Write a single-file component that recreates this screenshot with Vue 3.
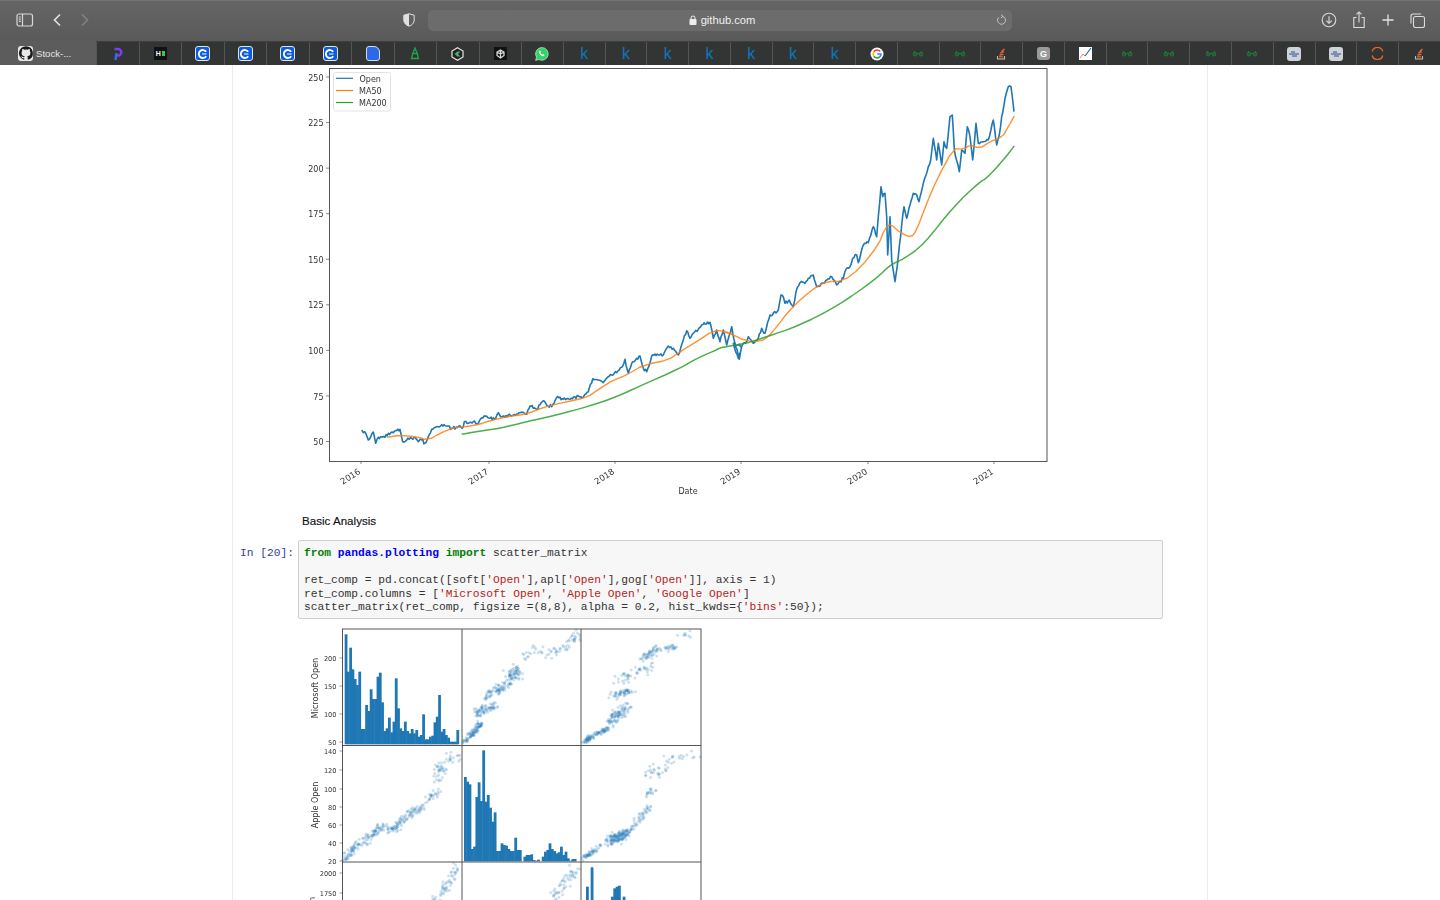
<script setup>
const tabs = ['p', 'hn', 'c', 'c', 'c', 'c', 'doc', 'a', 'hex', 'box', 'wa', 'k', 'k', 'k', 'k', 'k', 'k', 'k', 'g', 'gl', 'gl', 'so', 'gg', 'chart', 'gl', 'gl', 'gl', 'gl', 'db', 'db', 'arc', 'so']

// reads points from zoomed crops (3x) back to page coords
function page(ox, oy, flat) {
  const out = []
  for (let i = 0; i < flat.length; i += 2) out.push([ox + flat[i] / 3, oy + flat[i + 1] / 3])
  return out
}
const str = (list) => list.map((p) => p[0].toFixed(1) + ',' + p[1].toFixed(1)).join(' ')

let seed = 42
function rnd() {
  seed = (seed * 16807) % 2147483647
  return seed / 2147483647
}

function smooth(list, rounds) {
  let cur = list
  for (let r = 0; r < rounds; r++) {
    const next = [cur[0]]
    for (let i = 0; i < cur.length - 1; i++) {
      const a = cur[i]
      const b = cur[i + 1]
      next.push([a[0] * 0.75 + b[0] * 0.25, a[1] * 0.75 + b[1] * 0.25])
      next.push([a[0] * 0.25 + b[0] * 0.75, a[1] * 0.25 + b[1] * 0.75])
    }
    next.push(cur[cur.length - 1])
    cur = next
  }
  return cur
}

const blueRaw = [
  ...page(330, 280, [95,450,100,458,108,462,115,480,122,470,130,456,137,490,145,472,155,470,165,472,175,460,190,458,210,448,218,485,230,480,245,475,255,472,265,485,275,480,285,490,295,470,305,448,325,440,345,437,365,445,385,440,400,440,403,425,415,430,430,425,445,430,462,408,480,415,497,415,505,398,515,410,535,405,560,402,580,397,590,403,600,378,620,388,640,362,650,375,665,380,680,352,700,358,720,358,745,348,760,352,775,335,788,296,805,300,820,308,830,295,845,285,860,278,875,262,885,238,895,280,908,245,920,235,930,228,940,265,950,275,965,228,985,225,1000,225,1015,198,1030,205,1045,225,1060,180,1070,152,1080,175,1090,160,1105,148,1115,135,1140,127,1150,175,1160,150,1170,185,1180,150,1190,195,1205,140,1215,190,1228,238,1235,200]),
  ...page(720, 70, [40,820,55,865,65,830,80,815,85,800,100,820,115,805,125,775,135,790,150,735,175,720,183,675,190,680,195,700,208,690,220,710,228,665,240,638,255,640,265,625,280,615,290,650,310,640,335,620,350,645,370,625,378,598,390,590,398,565,410,555,415,578,430,525,445,518,460,470,470,500,475,440,483,350,488,380,495,370,500,440,503,555,510,440,515,570,525,635,535,560,545,465,552,410,560,445,570,405,580,370,590,375,597,395,610,340,625,290,632,270,640,205,650,270,655,220,665,285,672,215,680,235,690,140,697,135,703,240,718,305,725,240,735,250,742,170,750,200,758,270,768,160,775,220,790,215,805,210,820,150,830,225,838,195,845,140,855,85,865,50,873,50,878,90,882,125])
]
// add the day to day wobble between the read points
const blue = []
blueRaw.forEach((p, i) => {
  blue.push(p)
  const n = blueRaw[i + 1]
  if (!n) return
  const steps = Math.max(1, Math.round(Math.abs(n[0] - p[0]) / 1.2))
  for (let s = 1; s < steps; s++) {
    const t = s / steps
    blue.push([p[0] + (n[0] - p[0]) * t, p[1] + (n[1] - p[1]) * t + (rnd() - 0.5) * 3.2])
  }
})

const orange = smooth([
  ...page(330, 280, [170,472,210,466,255,470,295,480,330,460,370,443,410,440,450,432,480,422,530,410,590,402,640,382,700,367,770,353,810,325,850,300,890,285,940,255,1015,240,1050,215,1100,185,1150,152,1180,153,1215,165]),
  ...page(720, 70, [0,782,40,795,75,812,120,815,145,800,175,765,200,730,250,680,290,650,320,635,370,633,420,595,475,525,495,475,512,462,540,488,573,503,590,480,620,400,650,330,700,235,730,238,750,225,780,235,810,215,848,200,865,170,883,138])
], 1)
const green = smooth([
  ...page(330, 280, [395,463,450,453,510,445,590,425,680,405,780,378,860,350,930,318,1050,265,1100,235,1170,205]),
  ...page(720, 70, [0,833,80,820,140,800,230,770,350,710,470,625,510,585,550,567,610,525,700,410,780,335,800,325,850,270,883,228])
], 2)

const yTicks = [250, 225, 200, 175, 150, 125, 100, 75, 50].map((v) => ({ v, y: 441.5 - (v - 50) * 1.8225 }))
const xTicks = [[2016, 361], [2017, 489], [2018, 615], [2019, 741], [2020, 868], [2021, 994]].map(([v, x]) => ({ v, x }))

// histograms: tops as read from the 3x crop
function bars(x0, w, base, tops) {
  return tops.map((t, i) => ({ x: 300 + (x0 + i * w) / 3, y: 625 + t / 3, w: w / 3 + 0.5, h: (base - t) / 3 }))
}
const hist = [
  ...bars(134, 6.84, 358, [28,140,68,133,162,180,140,312,312,240,258,193,222,222,155,143,232,318,310,278,322,290,160,250,310,318,290,318,325,312,325,315,335,330,268,343,343,335,332,292,275,210,320,312,330,338,350,350,350,315]),
  ...bars(492, 6.86, 709, [456,470,478,672,665,516,472,528,376,530,510,548,590,562,678,678,655,660,662,672,678,678,638,675,675,709,695,690,690,688,705,707,704,709,695,680,675,655,672,678,685,682,665,690,680,700,707,702,702,709]),
  ...[[858,785],[865,840],[872,727],[933,815],[940,790],[947,785],[954,782],[961,825],[968,815]].map(([x, t]) => ({ x: 300 + x / 3, y: 625 + t / 3, w: 2.8, h: 120 }))
]

function cloud(flat, n, spread, box) {
  const line = page(300, 625, flat)
  const lens = []
  let total = 0
  for (let i = 0; i < line.length - 1; i++) {
    const l = Math.hypot(line[i + 1][0] - line[i][0], line[i + 1][1] - line[i][1])
    lens.push(l)
    total += l
  }
  const out = []
  for (let k = 0; k < n; k++) {
    let d = rnd() * total
    let i = 0
    while (i < lens.length - 1 && d > lens[i]) d -= lens[i++]
    const t = d / lens[i]
    const x = line[i][0] + (line[i + 1][0] - line[i][0]) * t + (rnd() + rnd() - 1) * spread * 1.5
    const y = line[i][1] + (line[i + 1][1] - line[i][1]) * t + (rnd() + rnd() - 1) * spread * 1.5
    out.push({ x: Math.min(Math.max(x, box[0]), box[1]), y: Math.min(Math.max(y, box[2]), box[3]) })
  }
  return out
}
const topMid = [463, 580, 630, 744]
const topRight = [582, 700, 630, 744]
const midLeft = [343, 461, 746, 861]
const midRight = [582, 700, 746, 861]
const dots = [
  ...cloud([490,350,530,315,545,290], 90, 2.500, topMid),
  ...cloud([530,265,590,240], 70, 3.500, topMid),
  ...cloud([550,225,575,200,610,190,650,125], 110, 3.500, topMid),
  ...cloud([630,150,660,145], 25, 6, topMid),
  ...cloud([670,105,710,70], 15, 3, topMid),
  ...cloud([730,85,790,65,835,25], 50, 5, topMid),
  ...cloud([850,350,900,322,925,312], 90, 2, topRight),
  ...cloud([925,290,985,245], 90, 4.500, topRight),
  ...cloud([935,215,1000,195], 50, 3, topRight),
  ...cloud([960,170,1045,125], 45, 5, topRight),
  ...cloud([1030,100,1075,68], 50, 3.500, topRight),
  ...cloud([1095,72,1125,68], 22, 3, topRight),
  ...cloud([1130,35,1190,22], 8, 3, topRight),
  ...cloud([135,700,170,660,200,645,240,610,290,610,300,590,340,560,370,545], 220, 3.500, midLeft),
  ...cloud([375,530,420,495], 25, 3.500, midLeft),
  ...cloud([405,460,425,420,470,390], 50, 5, midLeft),
  ...cloud([850,700,900,665], 50, 2, midRight),
  ...cloud([925,650,985,620], 130, 4, midRight),
  ...cloud([960,650,1050,545], 60, 3, midRight),
  ...cloud([1030,520,1060,490], 15, 3, midRight),
  ...cloud([1040,450,1110,420], 30, 5, midRight),
  ...cloud([1100,400,1190,390], 15, 5, midRight),
  ...cloud([400,830,430,800,455,765,472,722], 50, 4, [343, 461, 863, 900]),
  ...cloud([745,825,770,800,800,770,830,725], 50, 4.500, [463, 580, 863, 900])
]

const matrixTicks = [
  [200, 658], [150, 686], [100, 714], [50, 742],
  [140, 751], [120, 770], [100, 789], [80, 807], [60, 825], [40, 843], [20, 861],
  [2000, 873], [1750, 893]
].map(([v, y]) => ({ v, y }))
</script>

<template>
  <div class="app">
    <header class="toolbar">
      <div class="nav-left">
        <svg class="ico" width="18" height="14" viewBox="0 0 18 14" fill="none" stroke="#d8d8d8" stroke-width="1.2">
          <rect x="1" y="1" width="15.5" height="12" rx="2" />
          <path d="M6.5 1v12M2.8 4h2M2.8 6.2h2M2.8 8.4h2" />
        </svg>
        <svg class="back" width="10" height="14" viewBox="0 0 10 14" fill="none" stroke="#e4e4e4" stroke-width="1.6"><path d="M8 1.5 2.5 7 8 12.5" /></svg>
        <svg class="forward" width="10" height="14" viewBox="0 0 10 14" fill="none" stroke="#838383" stroke-width="1.6"><path d="M2 1.5 7.5 7 2 12.5" /></svg>
      </div>
      <svg class="shield" width="12" height="14" viewBox="0 0 12 14">
        <path d="M6 .8 11.2 2.2V7c0 3-2.2 5.2-5.2 6.2C3 12.200.8 10 .8 7V2.200Z" fill="none" stroke="#e0e0e0" stroke-width="1" />
        <path d="M6 .8V13.200C3 12.200.8 10 .8 7V2.200Z" fill="#e0e0e0" />
      </svg>
      <div class="address">
        <svg width="8" height="10" viewBox="0 0 8 10"><rect x="0.5" y="4" width="7" height="6" rx="1" fill="#eee" /><path d="M2 4.500V3a2 2 0 0 1 4 0v1.500" fill="none" stroke="#eee" stroke-width="1" /></svg>
        <span>github.com</span>
        <svg class="reload" width="11" height="12" viewBox="0 0 11 12" fill="none" stroke="#c4c4c4" stroke-width="1">
          <path d="M6.300 2.300a4 4 0 1 1-3.600 1.100" />
          <path d="M5 .6 7 2.300 5 4" />
        </svg>
      </div>
      <div class="nav-right">
        <svg width="16" height="16" viewBox="0 0 16 16" fill="none" stroke="#dcdcdc" stroke-width="1.100">
          <circle cx="8" cy="8" r="6.800" />
          <path d="M8 4.200v7M5.300 8.600 8 11.300l2.700-2.700" />
        </svg>
        <svg width="14" height="18" viewBox="0 0 14 18" fill="none" stroke="#dcdcdc" stroke-width="1.100">
          <path d="M4.500 6.500H1.800v10h10.400v-10H9.500M7 11.500V1M4.500 3.300 7 .9l2.500 2.400" />
        </svg>
        <svg width="14" height="14" viewBox="0 0 14 14" fill="none" stroke="#e4e4e4" stroke-width="1.300"><path d="M7 1.500v11M1.500 7h11" /></svg>
        <svg width="15" height="15" viewBox="0 0 15 15" fill="none" stroke="#dcdcdc" stroke-width="1.100">
          <rect x="3.500" y="3.500" width="11" height="11" rx="2" />
          <path d="M1 10.500V3a2 2 0 0 1 2-2h8" />
        </svg>
      </div>
    </header>

    <nav class="tabbar">
      <div class="tab active">
        <span class="gh">
          <svg width="14" height="14" viewBox="0 0 16 16"><path fill="#1b1b1b" d="M8 .2a8 8 0 0 0-2.500 15.600c.4.100.5-.2.500-.4v-1.400c-2.200.5-2.700-1-2.700-1-.4-.9-.9-1.200-.9-1.200-.7-.5.100-.5.100-.5.800.1 1.200.8 1.200.8.700 1.200 1.900.9 2.300.7.100-.5.300-.9.500-1.100-1.800-.2-3.600-.9-3.600-4 0-.9.300-1.600.8-2.100-.1-.2-.4-1 .1-2.100 0 0 .7-.2 2.200.8a7.600 7.600 0 0 1 4 0c1.500-1 2.200-.8 2.200-.8.400 1.100.2 1.900.1 2.100.5.600.8 1.300.8 2.100 0 3.100-1.900 3.700-3.700 3.900.3.300.6.800.6 1.500v2.200c0 .2.100.5.600.4A8 8 0 0 0 8 .2Z" /></svg>
        </span>
        <span class="tab-title">Stock-...</span>
      </div>
      <div v-for="(t, i) in tabs" :key="i" class="tab">
        <svg v-if="t === 'p'" width="10" height="14" viewBox="0 0 10 14" fill="none" stroke-width="2.400">
          <path d="M1.500 2h3.500a3 3 0 0 1 0 6.500H3" stroke="#7a3ff0" />
          <path d="M3.500 6 2.500 13" stroke="#2f6df2" />
        </svg>
        <span v-else-if="t === 'hn'" class="hn">H<i></i></span>
        <span v-else-if="t === 'c'" class="cf">
          <svg width="10" height="10" viewBox="0 0 10 10" fill="none" stroke="#fff" stroke-width="1.800"><path d="M8.200 2.800a4 4 0 1 0 0 4.400" /><path d="M4 5h4.500" stroke-width="1" /></svg>
        </span>
        <span v-else-if="t === 'doc'" class="doc"></span>
        <svg v-else-if="t === 'a'" width="10" height="13" viewBox="0 0 10 13" fill="none" stroke="#1ca84b" stroke-width="1.300">
          <path d="M5 1 2.800 6.500h4.400ZM2.800 6.500 1.500 11.500h7L7.200 6.500M1 11.500h8" />
        </svg>
        <svg v-else-if="t === 'hex'" width="13" height="14" viewBox="0 0 13 14">
          <path d="M6.500.8 12 4v6l-5.500 3.200L1 10V4Z" fill="#222" stroke="#e6e6e6" stroke-width="1.200" />
          <path d="M3.500 7 6.500 4.500h3L7 7l2.500 2.500h-3Z" fill="#3fb56b" />
        </svg>
        <span v-else-if="t === 'box'" class="boxy">
          <svg width="9" height="10" viewBox="0 0 9 10" fill="none" stroke="#ddd" stroke-width="1.200"><path d="M4.500 1 8 3v3.500L4.500 9 1 6.500V3ZM4.500 1v8M1 3l3.500 2L8 3" /></svg>
        </span>
        <svg v-else-if="t === 'wa'" width="14" height="14" viewBox="0 0 14 14">
          <path d="M7 .5a6.400 6.400 0 0 0-5.500 9.700L.6 13.400l3.300-.8A6.400 6.400 0 1 0 7 .5Z" fill="#2fd366" stroke="#eee" stroke-width=".6" />
          <path d="M4.500 3.800c-.9.900-.6 2.400.8 3.900s3 1.900 3.900 1l.4-.8-1.600-.9-.7.600c-.8-.3-1.600-1.100-1.900-1.900l.6-.7-.8-1.500Z" fill="#fff" />
        </svg>
        <span v-else-if="t === 'k'" class="kay">k</span>
        <svg v-else-if="t === 'g'" width="14" height="14" viewBox="0 0 14 14" fill="none">
          <circle cx="7" cy="7" r="6.500" fill="#fff" />
          <path d="M10.200 4.400A4 4 0 0 0 3.800 4.800" stroke="#ea4335" stroke-width="1.600" />
          <path d="M3.800 4.800a4 4 0 0 0 0 4.400" stroke="#fbbc05" stroke-width="1.600" />
          <path d="M3.800 9.200a4 4 0 0 0 6.200.4" stroke="#34a853" stroke-width="1.600" />
          <path d="M10 9.600A4 4 0 0 0 11 7H7.200" stroke="#4285f4" stroke-width="1.600" />
        </svg>
        <svg v-else-if="t === 'gl'" width="12" height="7" viewBox="0 0 12 7" fill="#1d7a3a" stroke="#1d7a3a" stroke-width="1">
          <circle cx="3" cy="4.200" r="1.800" fill-opacity=".45" /><circle cx="9" cy="4.200" r="1.800" fill-opacity=".45" /><path d="M5 3.500h2M1.500 2.500 3 1M10.500 2.500 9 1" />
        </svg>
        <svg v-else-if="t === 'so'" width="11" height="12" viewBox="0 0 11 12" fill="none">
          <path d="M1.500 8v3h7V8" stroke="#bcbbbb" stroke-width="1.100" />
          <path d="M3 8.800h4M3.400 7l4-.6M4.200 5.200l3.700-1.500M5.500 3.500l3-2.400" stroke="#f0652a" stroke-width="1.300" />
        </svg>
        <span v-else-if="t === 'gg'" class="gray-g">G</span>
        <span v-else-if="t === 'chart'" class="chart-ico">
          <svg width="13" height="13" viewBox="0 0 13 13" fill="none"><path d="M1 11 4 7l2 2" stroke="#e8836a" stroke-width="1" /><path d="M6 9l3-4 3-4" stroke="#2a66b8" stroke-width="1.200" /></svg>
        </span>
        <span v-else-if="t === 'db'" class="db">
          <svg width="12" height="8" viewBox="0 0 12 8" fill="none" stroke="#2d4f95"><path d="M1 4h10M3 2h4M4 6h5" /></svg>
        </span>
        <svg v-else-if="t === 'arc'" width="13" height="13" viewBox="0 0 13 13" fill="none" stroke="#e8672a" stroke-width="1.300">
          <path d="M1.200 4.500a5.500 5.500 0 0 1 10.600 0M1.200 8.500a5.500 5.500 0 0 0 10.600 0" />
        </svg>
      </div>
    </nav>

    <main class="page">
      <div class="notebook">
        <svg class="line-chart" width="760" height="440" viewBox="298 65 760 440">
          <polyline :points="str(blue)" fill="none" stroke="#1f77b4" stroke-width="1.600" stroke-linejoin="round" />
          <polyline :points="str(orange)" fill="none" stroke="#ff7f0e" stroke-width="1.400" stroke-opacity=".85" stroke-linejoin="round" />
          <polyline :points="str(green)" fill="none" stroke="#2ca02c" stroke-width="1.500" stroke-opacity=".85" stroke-linejoin="round" />
          <rect x="329.500" y="68.500" width="717.500" height="393" fill="none" stroke="#555" stroke-width="1" />
          <g v-for="t in yTicks" :key="t.v">
            <line x1="326" x2="329" :y1="t.y" :y2="t.y" stroke="#555" stroke-width=".7" />
            <text class="tick" x="323.500" :y="t.y + 3.600" text-anchor="end">{{ t.v }}</text>
          </g>
          <g v-for="t in xTicks" :key="t.v">
            <line :x1="t.x" :x2="t.x" y1="461" y2="464" stroke="#555" stroke-width=".7" />
            <text class="tick wide" text-anchor="end" :transform="`translate(${t.x} 473) rotate(-33)`">{{ t.v }}</text>
          </g>
          <text class="tick" x="688" y="494" text-anchor="middle">Date</text>
          <rect x="333.500" y="72.500" width="57" height="38.500" rx="2" fill="#fff" stroke="#dcdcdc" stroke-width=".8" />
          <line x1="336" x2="353" y1="78.300" y2="78.300" stroke="#1f77b4" stroke-width="1.200" />
          <line x1="336" x2="353" y1="90.500" y2="90.500" stroke="#ff7f0e" stroke-width="1.200" />
          <line x1="336" x2="353" y1="102.500" y2="102.500" stroke="#2ca02c" stroke-width="1.200" />
          <text class="tick" x="359.500" y="81.800">Open</text>
          <text class="tick" x="359" y="94">MA50</text>
          <text class="tick" x="359" y="106">MA200</text>
        </svg>

        <p class="markdown">Basic Analysis</p>

        <section class="cell">
          <div class="prompt">In [20]:</div>
          <pre class="code"><b class="kw">from</b> <b class="mod">pandas.plotting</b> <b class="kw">import</b> scatter_matrix

ret_comp = pd.concat([soft[<span class="st">'Open'</span>],apl[<span class="st">'Open'</span>],gog[<span class="st">'Open'</span>]], axis = 1)
ret_comp.columns = [<span class="st">'Microsoft Open'</span>, <span class="st">'Apple Open'</span>, <span class="st">'Google Open'</span>]
scatter_matrix(ret_comp, figsize =(8,8), alpha = 0.2, hist_kwds={<span class="st">'bins'</span>:50});</pre>
        </section>

        <svg class="matrix" width="420" height="280" viewBox="298 625 420 280">
          <rect v-for="(b, i) in hist" :key="i" :x="b.x" :y="b.y" :width="b.w" :height="b.h" fill="#1f77b4" />
          <circle v-for="(d, i) in dots" :key="'d' + i" :cx="d.x" :cy="d.y" r="1.500" fill="#1f77b4" opacity=".22" />
          <rect x="342.500" y="629" width="358.500" height="290" fill="none" stroke="#555" stroke-width="1" />
          <path d="M462 629V905M581 629V905M342 745.500H701M342 862H701" fill="none" stroke="#555" stroke-width="1" />
          <g v-for="t in matrixTicks" :key="t.v + '-' + t.y">
            <line x1="339.500" x2="342" :y1="t.y" :y2="t.y" stroke="#555" stroke-width=".6" />
            <text class="tick small" x="336.500" :y="t.y + 2.500" text-anchor="end">{{ t.v }}</text>
          </g>
          <text class="tick" text-anchor="middle" transform="translate(318 688) rotate(-90)">Microsoft Open</text>
          <text class="tick" text-anchor="middle" transform="translate(318 805) rotate(-90)">Apple Open</text>
          <text class="tick" text-anchor="end" transform="translate(315 897) rotate(-90)">Google Open</text>
        </svg>
      </div>
    </main>
  </div>
</template>

<style>
html, body { margin: 0; background: #fff; overflow: hidden; }
</style>

<style scoped>
.app {
  height: 900px;
  display: flex;
  flex-direction: column;
  overflow: hidden;
  font-family: "Liberation Sans", Arial, sans-serif;
}
.toolbar {
  height: 41px;
  flex: none;
  display: flex;
  align-items: center;
  padding: 0 0 2px 16px;
  box-sizing: border-box;
  background: linear-gradient(#656566, #5a5a5b);
  border-top: 1px solid #737373;
}
.nav-left { display: flex; align-items: center; width: 387px; }
.back { margin-left: 18px; }
.forward { margin-left: 18px; }
.shield { margin-right: 13px; }
.address {
  width: 584px;
  height: 21px;
  flex: none;
  position: relative;
  display: flex;
  align-items: center;
  justify-content: center;
  gap: 4px;
  padding-left: 4px;
  box-sizing: border-box;
  border-radius: 5px;
  background: #6c6c6d;
  color: #f0f0f0;
  font-size: 11.200px;
}
.reload { position: absolute; right: 5px; top: 4px; }
.nav-right {
  flex: 1;
  display: flex;
  align-items: center;
  gap: 15px;
  justify-content: flex-end;
  padding-right: 15px;
}
.tabbar {
  height: 24px;
  flex: none;
  display: flex;
  background: #333534;
  border-top: 1px solid #3f3f3f;
  box-sizing: border-box;
}
.tab {
  flex: 41.750 1 0;
  display: flex;
  align-items: center;
  justify-content: center;
  border-left: 1px solid #565656;
  box-sizing: border-box;
  min-width: 0;
}
.tab:nth-child(-n+11) { flex-grow: 42.500; }
.tab.active {
  flex: none;
  width: 96px;
  border-left: 0;
  justify-content: flex-start;
  gap: 3px;
  padding-left: 18px;
  background: #5c5c5c;
  margin-top: -1px;
}
.gh {
  width: 15px;
  height: 15px;
  border-radius: 3px;
  background: #e8e8e8;
  display: flex;
  align-items: center;
  justify-content: center;
}
.tab-title { color: #e6e6e6; font-size: 9.600px; }
.hn {
  width: 13px;
  height: 13px;
  background: #111;
  color: #fff;
  font: bold 7px "Liberation Sans", sans-serif;
  display: flex;
  align-items: center;
  justify-content: center;
  gap: 1px;
}
.hn i { width: 3px; height: 5px; background: #2ec866; }
.cf {
  width: 15px;
  height: 15px;
  box-sizing: border-box;
  border: 1px solid #dfe6f2;
  border-radius: 3px;
  background: #0b5ce0;
  display: flex;
  align-items: center;
  justify-content: center;
}
.doc {
  width: 14px;
  height: 15px;
  box-sizing: border-box;
  border: 1px solid #d5dcec;
  border-radius: 3px 6px 3px 3px;
  background: #2a6ae8;
}
.boxy {
  width: 13px;
  height: 13px;
  background: #111;
  display: flex;
  align-items: center;
  justify-content: center;
}
.kay {
  color: #0b76bd;
  font: 16px "Liberation Sans", sans-serif;
  line-height: 1;
}
.gray-g {
  width: 13px;
  height: 13px;
  border-radius: 3px;
  background: #9a9a9a;
  color: #fff;
  font: bold 9px "Liberation Sans", sans-serif;
  display: flex;
  align-items: center;
  justify-content: center;
}
.chart-ico {
  width: 13px;
  height: 13px;
  background: #fff;
  display: flex;
}
.db {
  width: 14px;
  height: 14px;
  border-radius: 3px;
  background: #ced3d9;
  display: flex;
  align-items: center;
  justify-content: center;
}
.page { flex: 1; overflow: hidden; background: #fff; }
.notebook {
  width: 976px;
  height: 100%;
  margin: 0 auto;
  box-sizing: border-box;
  border-left: 1px solid #ececec;
  border-right: 1px solid #ececec;
}
.line-chart, .matrix {
  display: block;
  margin-left: 65px;
  filter: blur(0.35px);
}
.tick {
  font-family: "DejaVu Sans", sans-serif;
  font-size: 8px;
  fill: #333;
}
.tick.wide { font-size: 8.500px; }
.tick.small { font-size: 6.600px; }
.markdown {
  margin: 8px 0 0 69px;
  height: 27px;
  font-size: 11.600px;
  line-height: 16px;
  color: #111;
  -webkit-text-stroke: 0.15px #111;
}
.cell { display: flex; margin: 0 0 0 7px; }
.prompt {
  width: 58px;
  flex: none;
  padding-top: 6.500px;
  font: 11.250px/13.700px "Liberation Mono", monospace;
  color: #303f9f;
}
.code {
  width: 865px;
  height: 79px;
  margin: 0;
  box-sizing: border-box;
  padding: 5.500px 5px 0;
  background: #f7f7f7;
  border: 1px solid #cfcfcf;
  border-radius: 2px;
  font: 11.250px/13.700px "Liberation Mono", monospace;
  color: #333;
}
.kw { color: #008000; }
.mod { color: #0000ff; }
.st { color: #ba2121; }
.matrix { margin-top: 6px; }
</style>
